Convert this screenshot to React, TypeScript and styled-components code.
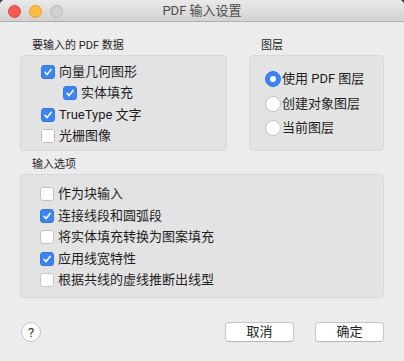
import React from "react";
import { styled, createGlobalStyle } from "styled-components";

const GlobalStyle = createGlobalStyle`
  html, body {
    margin: 0;
    padding: 0;
    background: #3b3b3b;
  }
  body {
    font-family: Roboto, "Noto Sans CJK SC", sans-serif;
  }
`;

const CheckIcon = () => (
  <svg width="10" height="10" viewBox="0 0 10 10">
    <path
      d="M2 5.3 L4.1 7.6 L8.1 2.4"
      fill="none"
      stroke="#ffffff"
      strokeWidth="1.6"
      strokeLinecap="round"
      strokeLinejoin="round"
    />
  </svg>
);

const CheckItem = ({
  checked,
  label,
  indent,
}: {
  checked: boolean;
  label: string;
  indent?: boolean;
}) => (
  <Row indent={indent}>
    <CheckBox checked={checked}>{checked && <CheckIcon />}</CheckBox>
    <ItemText>{label}</ItemText>
  </Row>
);

const RadioItem = ({ selected, label }: { selected: boolean; label: string }) => (
  <RadioRow>
    <Radio selected={selected}>{selected && <RadioDot />}</Radio>
    <ItemText>{label}</ItemText>
  </RadioRow>
);

const App = () => {
  return (
    <Window>
      <GlobalStyle />
      <TitleBar>
        <Lights>
          <Light color="#fc5753" border="#df4744" />
          <Light color="#fdbc40" border="#de9f34" />
          <Light color="#d0d0d0" border="#b9b9b9" />
        </Lights>
        <Title>PDF 输入设置</Title>
      </TitleBar>

      <Content>
        <TopRow>
          <Group width={207}>
            <GroupLabel>要输入的 PDF 数据</GroupLabel>
            <Box padTop={6} padBottom={4}>
              <CheckItem checked label="向量几何图形" />
              <CheckItem checked indent label="实体填充" />
              <CheckItem checked label="TrueType 文字" />
              <CheckItem checked={false} label="光栅图像" />
            </Box>
          </Group>
          <Group width={135}>
            <GroupLabel indent={12}>图层</GroupLabel>
            <Box padTop={12} padBottom={10.5} padLeft={16}>
              <RadioItem selected label="使用 PDF 图层" />
              <RadioItem selected={false} label="创建对象图层" />
              <RadioItem selected={false} label="当前图层" />
            </Box>
          </Group>
        </TopRow>

        <Group>
          <GroupLabel>输入选项</GroupLabel>
          <Box padTop={9.25} padBottom={7.25} padLeft={20}>
            <CheckItem checked={false} label="作为块输入" />
            <CheckItem checked label="连接线段和圆弧段" />
            <CheckItem checked={false} label="将实体填充转换为图案填充" />
            <CheckItem checked label="应用线宽特性" />
            <CheckItem checked={false} label="根据共线的虚线推断出线型" />
          </Box>
        </Group>

        <Footer>
          <HelpButton>?</HelpButton>
          <Buttons>
            <Button>取消</Button>
            <Button>确定</Button>
          </Buttons>
        </Footer>
      </Content>
    </Window>
  );
};

export default App;

const Window = styled.div`
  width: 404px;
  height: 361px;
  background: #ececec;
  border-radius: 5px 5px 0 0;
  overflow: hidden;
  display: flex;
  flex-direction: column;
`;

const TitleBar = styled.div`
  position: relative;
  height: 21px;
  flex-shrink: 0;
  display: flex;
  align-items: center;
  justify-content: center;
  background: linear-gradient(#e9e9e9, #d2d2d2);
  border-bottom: 1px solid #b0b0b0;
`;

const Lights = styled.div`
  position: absolute;
  left: 8px;
  top: 5px;
  display: flex;
  gap: 8px;
`;

const Light = styled.div<{ color: string; border: string }>`
  width: 11px;
  height: 11px;
  border-radius: 50%;
  background: ${({ color }) => color};
  border: 0.5px solid ${({ border }) => border};
`;

const Title = styled.div`
  font-size: 13px;
  color: #4c4c4c;
  line-height: 16px;
`;

const Content = styled.div`
  flex: 1;
  display: flex;
  flex-direction: column;
  padding: 17px 20px 0 20px;
`;

const TopRow = styled.div`
  display: flex;
  justify-content: space-between;
  margin-bottom: 7px;
`;

const Group = styled.div<{ width?: number }>`
  display: flex;
  flex-direction: column;
  width: ${({ width }) => (width ? `${width}px` : "auto")};
`;

const GroupLabel = styled.div<{ indent?: number }>`
  font-size: 11px;
  line-height: 14px;
  height: 14px;
  color: #262626;
  padding-left: ${({ indent }) => indent ?? 12}px;
  margin-bottom: 2px;
`;

const Box = styled.div<{ padTop: number; padBottom: number; padLeft?: number }>`
  background: #e3e3e3;
  border: 1px solid #d9d9d9;
  border-radius: 4px;
  padding: ${({ padTop }) => padTop - 1}px 8px
    ${({ padBottom }) => padBottom - 1}px
    ${({ padLeft }) => (padLeft ?? 21) - 1}px;
  display: flex;
  flex-direction: column;
`;

const Row = styled.div<{ indent?: boolean }>`
  display: flex;
  align-items: center;
  height: 21.5px;
  gap: 4px;
  padding-left: ${({ indent }) => (indent ? 22 : 0)}px;
`;

const RadioRow = styled.div`
  display: flex;
  align-items: center;
  height: 24.5px;
  gap: 1px;
`;

const CheckBox = styled.div<{ checked: boolean }>`
  width: 14px;
  height: 14px;
  box-sizing: border-box;
  border-radius: 3px;
  display: flex;
  align-items: center;
  justify-content: center;
  flex-shrink: 0;
  background: ${({ checked }) => (checked ? "#3b84f7" : "#ffffff")};
  border: 1px solid ${({ checked }) => (checked ? "#3579e6" : "#c3c3c3")};
`;

const Radio = styled.div<{ selected: boolean }>`
  width: 16px;
  height: 16px;
  box-sizing: border-box;
  border-radius: 50%;
  display: flex;
  align-items: center;
  justify-content: center;
  flex-shrink: 0;
  background: ${({ selected }) => (selected ? "#3b84f7" : "#ffffff")};
  border: 1px solid ${({ selected }) => (selected ? "#3579e6" : "#c3c3c3")};
`;

const RadioDot = styled.div`
  width: 6px;
  height: 6px;
  border-radius: 50%;
  background: #ffffff;
`;

const ItemText = styled.span`
  font-size: 13px;
  line-height: 16px;
  color: #1e1e1e;
  white-space: nowrap;
`;

const Footer = styled.div`
  display: flex;
  align-items: center;
  justify-content: space-between;
  margin-top: 24px;
  height: 20px;
`;

const HelpButton = styled.div`
  width: 20px;
  height: 20px;
  box-sizing: border-box;
  margin-left: 1px;
  border-radius: 50%;
  background: #ffffff;
  border: 1px solid #c4c4c4;
  display: flex;
  align-items: center;
  justify-content: center;
  font-size: 13px;
  color: #333333;
  line-height: 1;
`;

const Buttons = styled.div`
  display: flex;
  gap: 21px;
`;

const Button = styled.div`
  width: 69px;
  height: 20px;
  box-sizing: border-box;
  background: #ffffff;
  border: 1px solid #c6c6c6;
  border-bottom-color: #b4b4b4;
  border-radius: 4px;
  display: flex;
  align-items: center;
  justify-content: center;
  font-size: 13px;
  color: #222222;
  line-height: 16px;
`;
